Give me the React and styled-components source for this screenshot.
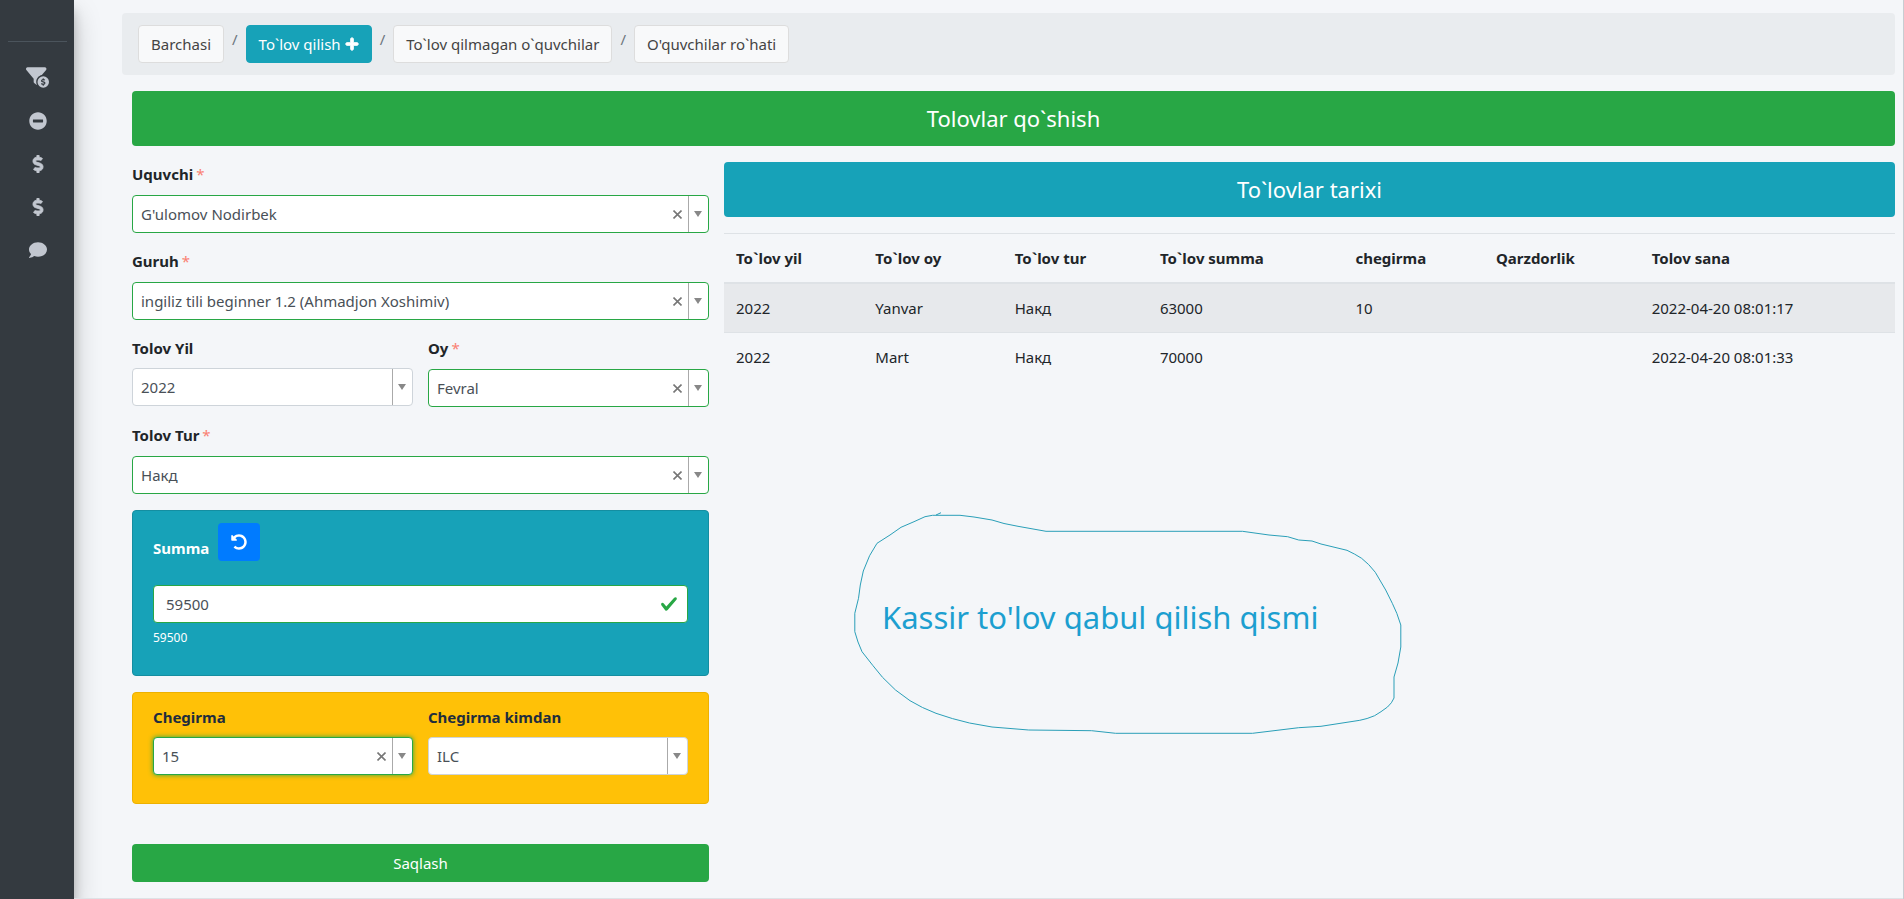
import React from 'react'
import styled, { createGlobalStyle, css } from 'styled-components'
import { FaUndoAlt, FaPlus, FaMinusCircle, FaDollarSign, FaComment } from 'react-icons/fa'
import { FaFilterCircleDollar } from 'react-icons/fa6'

const GlobalStyle = createGlobalStyle`
  *, *::before, *::after {
    box-sizing: border-box;
  }
  body {
    margin: 0;
    background: #f4f6f9;
    color: #212529;
    font-family: 'Noto Sans', 'Open Sans', sans-serif;
    font-size: 15px;
    line-height: 24px;
  }
  button, input, select {
    font: inherit;
    color: inherit;
    margin: 0;
  }
`

const Page = styled.div`
  display: flex;
  min-height: 100vh;
  border-right: 1px solid #c8cdd2;
`

const Sidebar = styled.nav`
  flex: none;
  width: 74px;
  padding: 41px 7px 0 8px;
  background: #343a40;
  box-shadow: 0 14px 28px rgba(0, 0, 0, 0.22), 0 10px 10px rgba(0, 0, 0, 0.18);
`

const MenuList = styled.ul`
  list-style: none;
  margin: 0;
  padding: 14px 0 0;
  border-top: 1px solid #4b545c;
`

const MenuLink = styled.a`
  display: flex;
  align-items: center;
  justify-content: center;
  height: 43px;
  color: #c2c7d0;
  font-size: 18px;
`

const DollarIcon = styled(FaDollarSign)`
  stroke-width: 24;
`

const PlusIcon = styled(FaPlus)`
  stroke-width: 36;
`

const Main = styled.main`
  flex: 1;
  min-width: 0;
  padding: 13px 8px 16px 48px;
  border-bottom: 1px solid #dee2e6;
`

const Breadcrumb = styled.ol`
  display: flex;
  flex-wrap: wrap;
  list-style: none;
  margin: 0 0 16px;
  padding: 12px 16px;
  background: #e9ecef;
  border-radius: 4px;
`

const Crumb = styled.li`
  display: flex;

  & + &::before {
    content: '/';
    padding: 2px 8px 0;
    color: #6c757d;
  }
`

const CrumbLink = styled.a`
  display: flex;
  align-items: center;
  gap: 4px;
  height: 38px;
  padding: 0 12px;
  border: 1px solid ${(props) => (props.$active ? '#17a2b8' : '#ddd')};
  border-radius: 4px;
  background: ${(props) => (props.$active ? '#17a2b8' : '#f8f9fa')};
  color: ${(props) => (props.$active ? '#fff' : '#444')};
  text-decoration: none;
`

const Content = styled.div`
  padding-left: 10px;
`

const Banner = styled.h1`
  margin: 0 0 16px;
  padding: 12px;
  border-radius: 4px;
  background: ${(props) => (props.$info ? '#17a2b8' : '#28a745')};
  color: #fff;
  font-size: 22px;
  font-weight: 400;
  line-height: 31px;
  text-align: center;
`

const Columns = styled.div`
  display: grid;
  grid-template-columns: calc((100% - 32px) / 3) minmax(0, 1fr);
  gap: 15px;
`

const Pair = styled.div`
  display: grid;
  grid-template-columns: 1fr 1fr;
  gap: 15px;
`

const Field = styled.div`
  margin-bottom: ${(props) => (props.$flush ? '0' : '16px')};
`

const Label = styled.label`
  display: block;
  margin-bottom: ${(props) => (props.$tight ? '8px' : '9px')};
  font-weight: 700;
`

const Star = styled.span`
  margin-left: 3px;
  color: #fa8072;
  font-weight: 400;
`

const SelectBox = styled.div`
  display: flex;
  height: 38px;
  border: 1px solid ${(props) => (props.$valid ? '#28a745' : '#ced4da')};
  border-radius: 4px;
  background: #fff;
  color: #495057;
  overflow: hidden;
  ${(props) =>
    props.$focused &&
    css`
      box-shadow: 0 0 5px #28a745;
    `}
`

const NativeSelect = styled.select`
  flex: 1;
  min-width: 0;
  padding: 0 0 0 8px;
  border: 0;
  background: transparent;
  appearance: none;
  outline: none;
`

const ClearButton = styled.button`
  display: flex;
  align-items: center;
  justify-content: center;
  width: 20px;
  padding: 0;
  border: 0;
  background: transparent;
  color: #777;
  cursor: pointer;
`

const Arrow = styled.span`
  display: flex;
  align-items: center;
  justify-content: center;
  width: 20px;
  border-left: 1px solid #aaa;

  &::after {
    content: '';
    border: 4px solid transparent;
    border-top: 6px solid #888;
    border-bottom: 0;
  }
`

const Card = styled.section`
  padding: 12px 20px 28px;
  margin-bottom: 16px;
  border: 1px solid ${(props) => (props.$warning ? '#edb100' : '#148ea1')};
  border-radius: 4px;
  background: ${(props) => (props.$warning ? '#ffc107' : '#17a2b8')};
  color: ${(props) => (props.$warning ? '#1f2d3d' : '#fff')};
`

const SumHead = styled.div`
  display: flex;
  align-items: flex-end;
  gap: 9px;
  margin-bottom: 24px;

  label {
    margin-bottom: 1px;
  }
`

const UndoButton = styled.button`
  display: flex;
  align-items: center;
  justify-content: center;
  width: 42px;
  height: 38px;
  border: 0;
  border-radius: 4px;
  background: #007bff;
  color: #fff;
  font-size: 16px;
`

const InputBox = styled.div`
  display: flex;
  align-items: center;
  height: 38px;
  padding: 0 9px 0 12px;
  border: 1px solid #28a745;
  border-radius: 4px;
  background: #fff;
  color: #495057;
`

const TextInput = styled.input`
  flex: 1;
  min-width: 0;
  padding: 0;
  border: 0;
  outline: none;
  background: transparent;
`

const Hint = styled.div`
  margin-top: 6px;
  font-size: 12px;
  line-height: 18px;
`

const SaveButton = styled.button`
  display: block;
  width: 100%;
  height: 38px;
  margin-top: 40px;
  border: 0;
  border-radius: 4px;
  background: #28a745;
  color: #fff;
`

const Table = styled.table`
  width: 100%;
  table-layout: fixed;
  border-collapse: collapse;

  th,
  td {
    padding: 12px;
    border-top: 1px solid #dee2e6;
    text-align: left;
  }
  thead th {
    border-bottom: 2px solid #dee2e6;
  }
  tbody tr:nth-of-type(odd) {
    background: rgba(0, 0, 0, 0.05);
  }
`

const Note = styled.div`
  position: relative;
  display: flex;
  width: 548px;
  height: 222px;
  margin: 132px 0 0 130px;
  padding: 80px 28px;
  color: #1c9fd0;
  font-size: 31px;
  line-height: 48px;
  white-space: nowrap;

  svg {
    position: absolute;
    inset: 0;
    overflow: visible;
  }
`

const menu = [
  { title: 'Filter', Icon: FaFilterCircleDollar, size: 23 },
  { title: 'Chiqim', Icon: FaMinusCircle },
  { title: 'Kirim', Icon: DollarIcon },
  { title: 'Kassa', Icon: DollarIcon },
  { title: 'Xabar', Icon: FaComment },
]

const columns = [
  ['To`lov yil', '11.9%'],
  ['To`lov oy', '11.9%'],
  ['To`lov tur', '12.4%'],
  ['To`lov summa', '16.7%'],
  ['chegirma', '12%'],
  ['Qarzdorlik', '13.3%'],
  ['Tolov sana', '21.8%'],
]

const payments = [
  ['2022', 'Yanvar', 'Накд', '63000', '10', '', '2022-04-20 08:01:17'],
  ['2022', 'Mart', 'Накд', '70000', '', '', '2022-04-20 08:01:33'],
]

const SelectField = ({ id, label, value, required, tight, clearable, valid, focused, flush }) => {
  const [current, setCurrent] = React.useState(value)
  return (
    <Field $flush={flush}>
      <Label htmlFor={id} $tight={tight}>
        {label}
        {required && <Star>*</Star>}
      </Label>
      <SelectBox $valid={valid} $focused={focused}>
        <NativeSelect id={id} value={current} onChange={(e) => setCurrent(e.target.value)}>
          <option value='' />
          <option value={value}>{value}</option>
        </NativeSelect>
        {clearable && (
          <ClearButton type='button' aria-label='Tozalash' onClick={() => setCurrent('')}>
            <svg width='9' height='9' viewBox='0 0 9 9' stroke='currentColor' strokeWidth='1.6'>
              <path d='M.5.5l8 8M8.5.5l-8 8' />
            </svg>
          </ClearButton>
        )}
        <Arrow aria-hidden='true' />
      </SelectBox>
    </Field>
  )
}

const App = () => {
  const [sum, setSum] = React.useState('59500')

  return (
    <>
      <GlobalStyle />
      <Page>
        <Sidebar>
          <MenuList>
            {menu.map(({ title, Icon, size }) => (
              <li key={title}>
                <MenuLink href='#' aria-label={title}>
                  <Icon size={size} />
                </MenuLink>
              </li>
            ))}
          </MenuList>
        </Sidebar>

        <Main>
          <Breadcrumb>
            <Crumb>
              <CrumbLink href='#'>Barchasi</CrumbLink>
            </Crumb>
            <Crumb>
              <CrumbLink href='#' $active>
                To`lov qilish <PlusIcon size={14} />
              </CrumbLink>
            </Crumb>
            <Crumb>
              <CrumbLink href='#'>To`lov qilmagan o`quvchilar</CrumbLink>
            </Crumb>
            <Crumb>
              <CrumbLink href='#'>O'quvchilar ro`hati</CrumbLink>
            </Crumb>
          </Breadcrumb>

          <Content>
            <Banner>Tolovlar qo`shish</Banner>
            <Columns>
              <form onSubmit={(e) => e.preventDefault()}>
                <SelectField id='student' label='Uquvchi' value="G'ulomov Nodirbek" required clearable valid />
                <SelectField
                  id='group'
                  label='Guruh'
                  value='ingiliz tili beginner 1.2 (Ahmadjon Xoshimiv)'
                  required
                  clearable
                  valid
                />
                <Pair>
                  <SelectField id='year' label='Tolov Yil' value='2022' tight />
                  <SelectField id='month' label='Oy' value='Fevral' required clearable valid />
                </Pair>
                <SelectField id='type' label='Tolov Tur' value='Накд' required clearable valid />

                <Card>
                  <SumHead>
                    <Label htmlFor='sum'>Summa</Label>
                    <UndoButton type='button' aria-label='Qaytarish' onClick={() => setSum('59500')}>
                      <FaUndoAlt />
                    </UndoButton>
                  </SumHead>
                  <InputBox>
                    <TextInput id='sum' value={sum} onChange={(e) => setSum(e.target.value)} />
                    <svg width='18' height='18' viewBox='0 0 8 8' fill='#28a745'>
                      <path d='M2.3 6.73L.6 4.53c-.4-1.04.46-1.4 1.1-.8l1.1 1.4 3.4-3.8c.6-.63 1.6-.27 1.2.7l-4 4.6c-.43.5-.8.4-1.1.1z' />
                    </svg>
                  </InputBox>
                  <Hint>{sum}</Hint>
                </Card>

                <Card $warning>
                  <Pair>
                    <SelectField id='discount' label='Chegirma' value='15' tight clearable valid focused flush />
                    <SelectField id='discountBy' label='Chegirma kimdan' value='ILC' tight flush />
                  </Pair>
                </Card>

                <SaveButton type='submit'>Saqlash</SaveButton>
              </form>

              <div>
                <Banner as='h2' $info>
                  To`lovlar tarixi
                </Banner>
                <Table>
                  <colgroup>
                    {columns.map(([name, width]) => (
                      <col key={name} width={width} />
                    ))}
                  </colgroup>
                  <thead>
                    <tr>
                      {columns.map(([name]) => (
                        <th key={name} scope='col'>
                          {name}
                        </th>
                      ))}
                    </tr>
                  </thead>
                  <tbody>
                    {payments.map((row) => (
                      <tr key={row[6]}>
                        {row.map((cell, i) => (
                          <td key={i}>{cell}</td>
                        ))}
                      </tr>
                    ))}
                  </tbody>
                </Table>

                <Note>
                  <svg width='548' height='222' viewBox='0 0 548 222' fill='none' stroke='#2a9fb8' aria-hidden='true'>
                    <path d='M87 -.3L82 2M78.5 2.3L106 2.3L120 4L138 7L150 10.5L164 13.3L192 18.3H388.5L415 22L433.6 23.7L444.7 27L458 28L467 31L493 37.3Q501 41 507.6 45.3Q515 51 521.3 59.3L531.7 77L538.3 90.3L542.8 100.3L546.8 112V134L544 150L540 164V185Q538 190 533.5 194Q527 199 520.6 202.7Q513 206 505.8 207.3L467 213.3L444.7 214.7L398.5 220.3H261.6L237.6 217.7L174.7 217L138 214L115.5 210Q98 206 82 200.3Q68 195 56 187.7L41.5 177L28.5 164.3L19 152.7L8 138.7L4 129L.8 118.7V100.3L4.5 85.3L6.3 72L9.3 58L15.6 42.7L23 30.3L36 22L47 14.3L60 8.7L71 3.7L78.5 2.3' />
                  </svg>
                  Kassir to'lov qabul qilish qismi
                </Note>
              </div>
            </Columns>
          </Content>
        </Main>
      </Page>
    </>
  )
}

export default App
